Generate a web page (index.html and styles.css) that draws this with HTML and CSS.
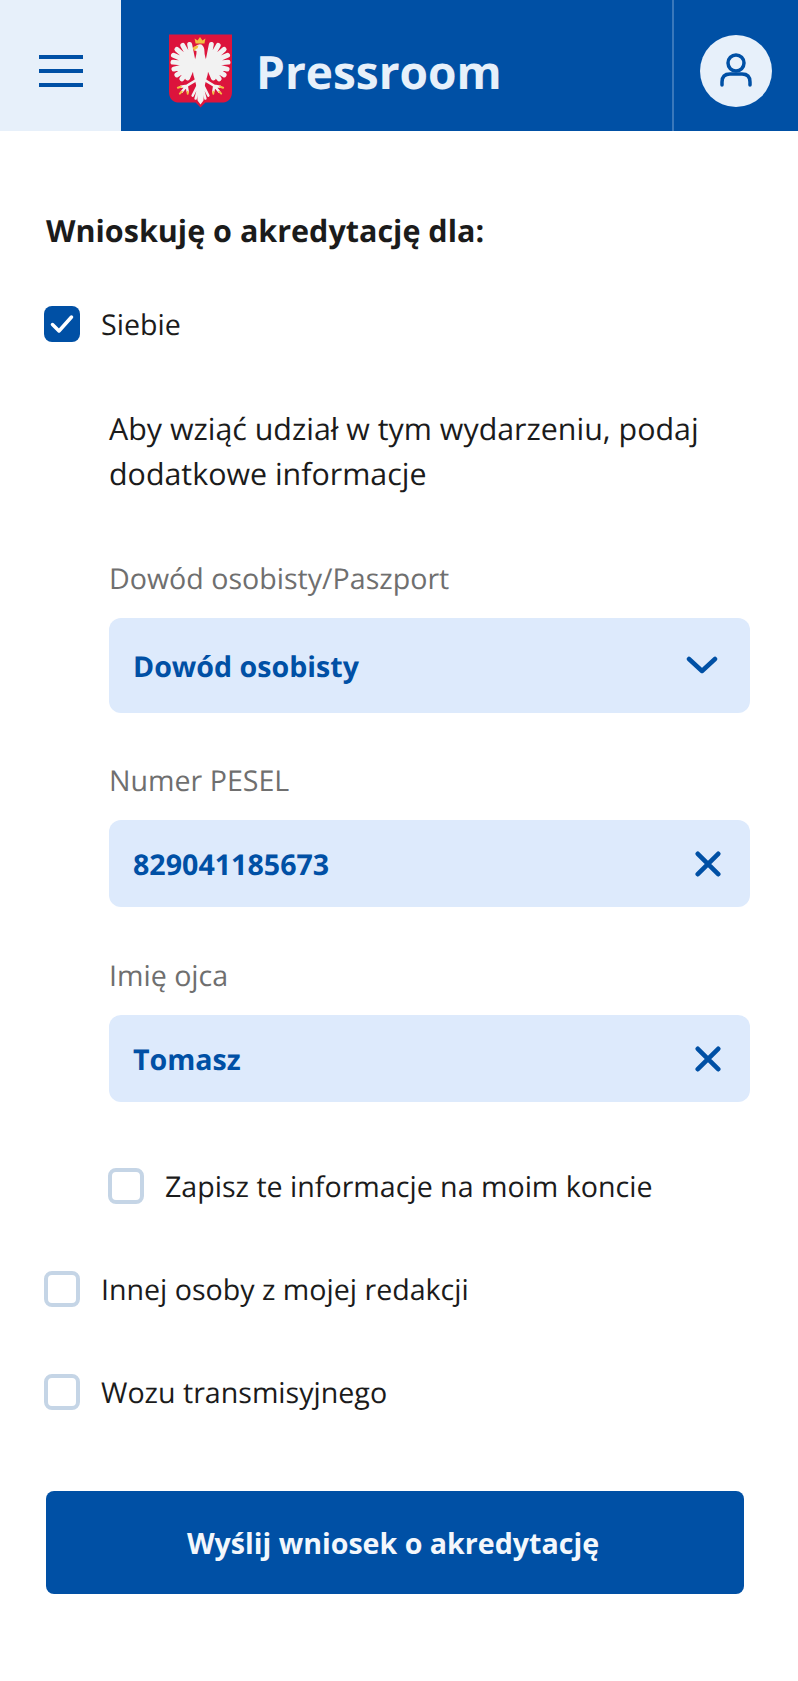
FILE: index.html
```html
<!DOCTYPE html>
<html lang="pl">
<head>
<meta charset="utf-8">
<title>Pressroom</title>
<link rel="stylesheet" href="styles.css">
</head>
<body>
<header class="topbar">
  <button class="menu-btn" aria-label="Menu">
    <svg width="44" height="32" viewBox="0 0 44 32"><path d="M0 2h44M0 16h44M0 30h44" stroke="#0050a5" stroke-width="4" fill="none"/></svg>
  </button>
  <div class="brand">
    <svg class="emblem" width="63" height="74" viewBox="0 0 64 74">
      <defs>
        <g id="half">
          <g stroke="#f2f2f2" stroke-width="5" stroke-linecap="round" fill="none">
            <path d="M25 30L21 10M25 30L14 11M25 30L8 15M25 30L4.500 21M25 30L4 28M25 30L5 35M25 30L8 41M25 30L13 45M25 30L19 44"/>
          </g>
          <g stroke="#f2f2f2" stroke-width="2.500" stroke-linecap="round" fill="none">
            <path d="M28 46L18 52 12 53M18 52L13 58M18 52L19 58"/>
            <path d="M30 50L24 62M31 50L27 65"/>
          </g>
          <path d="M12 53l-3 1M13 58l-2 2M19 58l0 2" stroke="#f2c042" stroke-width="2" stroke-linecap="round"/>
        </g>
      </defs>
      <path d="M0 0h64v58q0 11-11 11H37l-5 5-5-5H11Q0 69 0 58z" fill="#dc143c"/>
      <use href="#half"/>
      <use href="#half" transform="translate(64 0) scale(-1 1)"/>
      <path d="M26 13q3-4 7-3 3 2 3 7 0 5 3 12 2 8-1 16l-2 8-1 14-3 4-3-4-1-14-2-8q-3-8-1-16 3-7 3-12l-2-1z" fill="#f2f2f2"/>
      <path d="M27 9l-1-5 3 2 2.500-3.500 2.500 3.500 3-2-1 5z" fill="#f2c042"/>
      <path d="M24 14q1-3 6-3l-1 3-2 1-1 2z" fill="#f2c042"/>
    </svg>
    <span class="brand-name">Pressroom</span>
  </div>
  <div class="account">
    <div class="avatar">
      <svg width="32" height="36" viewBox="0 0 32 36"><circle cx="16" cy="10" r="8" fill="none" stroke="#0050a5" stroke-width="3.500"/><path d="M2 32v-3q0-8 8-8h12q8 0 8 8v3" fill="none" stroke="#0050a5" stroke-width="3.500" stroke-linecap="round"/></svg>
    </div>
  </div>
</header>
<main class="content">
  <h1 class="title">Wnioskuję o akredytację dla:</h1>
  <div class="check first">
    <span class="box checked">
      <svg width="24" height="20" viewBox="0 0 24 20"><path d="M2.500 10.500l6.500 6.500L21.500 3" fill="none" stroke="#fff" stroke-width="3.500" stroke-linecap="round" stroke-linejoin="round"/></svg>
    </span>
    <span class="check-text">Siebie</span>
  </div>
  <section class="details">
    <p class="intro">Aby wziąć udział w tym wydarzeniu, podaj dodatkowe informacje</p>
    <div class="label select-label">Dowód osobisty/Paszport</div>
    <div class="field select">
      <span>Dowód osobisty</span>
      <svg width="32" height="20" viewBox="0 0 32 20"><path d="M3 3l13 12L29 3" fill="none" stroke="#0050a5" stroke-width="4.500" stroke-linecap="round" stroke-linejoin="round"/></svg>
    </div>
    <div class="label">Numer PESEL</div>
    <div class="field">
      <span>829041185673</span>
      <svg width="26" height="26" viewBox="0 0 28 28"><path d="M3 3l22 22M25 3L3 25" fill="none" stroke="#0050a5" stroke-width="5" stroke-linecap="round"/></svg>
    </div>
    <div class="label label-tight">Imię ojca</div>
    <div class="field">
      <span>Tomasz</span>
      <svg width="26" height="26" viewBox="0 0 28 28"><path d="M3 3l22 22M25 3L3 25" fill="none" stroke="#0050a5" stroke-width="5" stroke-linecap="round"/></svg>
    </div>
    <div class="check save">
      <span class="box"></span>
      <span class="check-text">Zapisz te informacje na moim koncie</span>
    </div>
  </section>
  <div class="check other">
    <span class="box"></span>
    <span class="check-text">Innej osoby z mojej redakcji</span>
  </div>
  <div class="check other">
    <span class="box"></span>
    <span class="check-text">Wozu transmisyjnego</span>
  </div>
  <button class="submit">Wyślij wniosek o akredytację</button>
</main>
</body>
</html>
```
FILE: styles.css
```css
* { box-sizing: border-box; }
html, body { margin: 0; padding: 0; }
body { background: #fff; color: #1b1b1b; font-family: "Open Sans", sans-serif; text-rendering: geometricPrecision; width: 798px; height: 1681px; overflow: hidden; }

.topbar { display: flex; height: 131px; background: #0050a5; }
.menu-btn { width: 121px; height: 131px; background: #e7f0fa; border: 0; padding: 11px 0 0; display: flex; align-items: center; justify-content: center; }
.brand { flex: 1; display: flex; align-items: center; gap: 24px; padding: 10px 0 0 48px; }
.emblem { display: block; }
.brand-name { color: #e7f0fa; font-size: 46px; font-weight: 700; line-height: 1; padding-top: 2px; }
.account { width: 126px; border-left: 2px solid #3a78bb; display: flex; align-items: center; justify-content: center; padding: 10px 1px 0 0; }
.avatar { width: 72px; height: 72px; border-radius: 50%; background: #e7f0fa; display: flex; align-items: center; justify-content: center; }

.content { padding: 0 46px; }
.title { margin: 79px 0 0; font-size: 30.5px; line-height: 40px; font-weight: 700; }
.check { display: flex; align-items: center; gap: 21px; font-size: 28.6px; line-height: 38px; }
.check-text { padding-top: 2px; }
.first { margin-top: 54px; margin-left: -2px; }
.box { width: 36px; height: 36px; border: 4px solid #c5d5e6; border-radius: 8px; background: #fff; flex: none; display: flex; align-items: center; justify-content: center; }
.box.checked { background: #0050a5; border: 0; }
.details { margin-left: 63px; width: 641px; }
.intro { margin: 61px 0 0; padding-top: 1px; font-size: 30.4px; line-height: 45px; width: 620px; }
.label { font-size: 28.6px; line-height: 40px; color: #6f6f6f; margin-top: 48px; margin-bottom: 19px; }
.label-tight { margin-top: 49px; }
.select-label { margin-top: 63px; }
.field { height: 87px; padding: 2px 29px 0 24px; border-radius: 12px; background: #ddeafc; display: flex; align-items: center; justify-content: space-between; color: #0050a5; font-size: 28.6px; font-weight: 700; }
.field svg { margin-top: -2px; }
.select { height: 95px; padding-right: 32px; }
.save { margin-top: 64px; margin-left: -1px; }
.other { margin-top: 63px; margin-left: -2px; }
.submit { display: block; width: 698px; height: 103px; margin-top: 79px; padding: 0 4px 0 0; background: #0050a5; border: 0; border-radius: 8px; color: #f3f7fc; font: 700 28.6px "Open Sans", sans-serif; }
```
